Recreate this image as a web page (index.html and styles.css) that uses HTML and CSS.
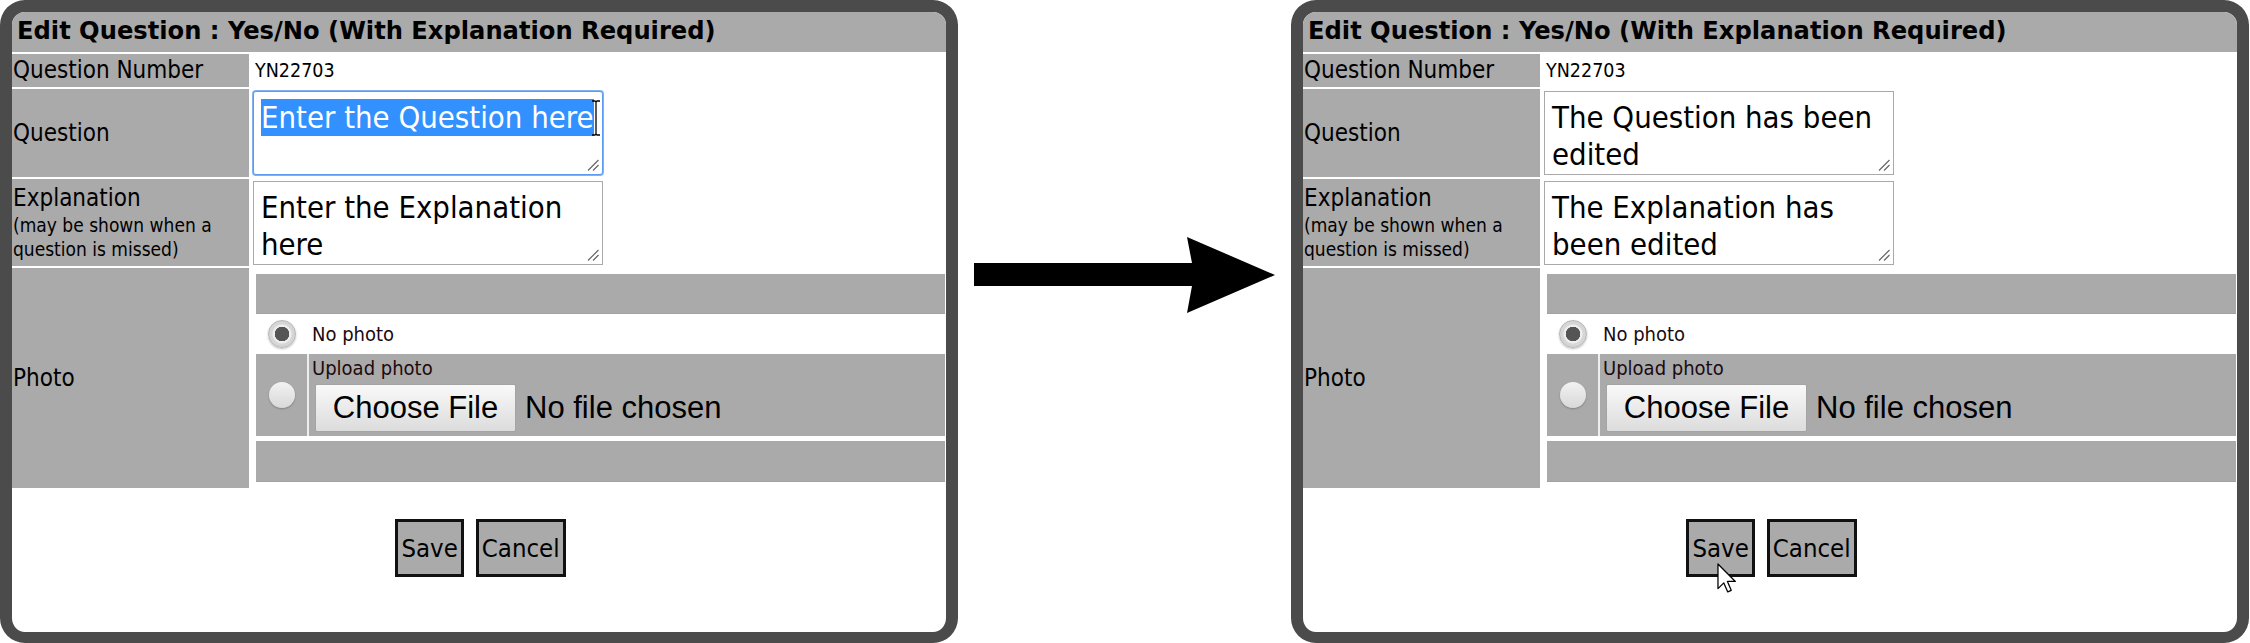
FILE: index.html
```html
<!DOCTYPE html>
<html lang="en">
<head>
<meta charset="utf-8">
<title>Edit Question</title>
<link rel="stylesheet" href="styles.css">
</head>
<body>
<div class="scene">
  <div class="panel">
    <div class="panel-title">Edit Question : Yes/No (With Explanation Required)</div>
    <div class="form">
      <div class="label">Question Number</div>
      <div class="value value-text">YN22703</div>
      <div class="label">Question</div>
      <div class="value">
        <div class="ta ta-focus"><span class="sel">Enter the Question here</span>
          <svg class="ibeam" width="10" height="36" viewBox="0 0 10 36"><path d="M1 1h3l1 1 1-1h3M5 2v32M1 35h3l1-1 1 1h3" fill="none" stroke="#000" stroke-width="1.3"/></svg>
          <svg class="grip" width="12" height="12" viewBox="0 0 12 12"><path d="M11.5 1L1 11.5M11.5 6L6 11.5" stroke="#666" stroke-width="1.2"/></svg>
        </div>
      </div>
      <div class="label"><div class="expl-main">Explanation</div><div class="expl-sub">(may be shown when a<br>question is missed)</div></div>
      <div class="value">
        <div class="ta">Enter the Explanation<br>here
          <svg class="grip" width="12" height="12" viewBox="0 0 12 12"><path d="M11.5 1L1 11.5M11.5 6L6 11.5" stroke="#666" stroke-width="1.2"/></svg>
        </div>
      </div>
      <div class="label">Photo</div>
      <div class="value photo">
        <div class="photo-bar"></div>
        <div class="photo-row photo-none">
          <div class="radio-cell"><span class="radio radio-on"></span></div>
          <div class="opt-text">No photo</div>
        </div>
        <div class="photo-row photo-upload">
          <div class="radio-cell"><span class="radio"></span></div>
          <div class="upload-content">
            <div class="opt-text">Upload photo</div>
            <div class="file"><button class="file-btn">Choose File</button><span class="file-name">No file chosen</span></div>
          </div>
        </div>
        <div class="photo-bar photo-bar-bottom"></div>
      </div>
    </div>
    <div class="actions"><button class="btn">Save</button><button class="btn">Cancel</button></div>
  </div>

  <div class="arrow">
    <svg width="333" height="643" viewBox="0 0 333 643"><polygon points="16,263 234,263 229,237 317,275 229,313 234,286 16,286" fill="#000"/></svg>
  </div>

  <div class="panel">
    <div class="panel-title">Edit Question : Yes/No (With Explanation Required)</div>
    <div class="form">
      <div class="label">Question Number</div>
      <div class="value value-text">YN22703</div>
      <div class="label">Question</div>
      <div class="value">
        <div class="ta">The Question has been<br>edited
          <svg class="grip" width="12" height="12" viewBox="0 0 12 12"><path d="M11.5 1L1 11.5M11.5 6L6 11.5" stroke="#666" stroke-width="1.2"/></svg>
        </div>
      </div>
      <div class="label"><div class="expl-main">Explanation</div><div class="expl-sub">(may be shown when a<br>question is missed)</div></div>
      <div class="value">
        <div class="ta">The Explanation has<br>been edited
          <svg class="grip" width="12" height="12" viewBox="0 0 12 12"><path d="M11.5 1L1 11.5M11.5 6L6 11.5" stroke="#666" stroke-width="1.2"/></svg>
        </div>
      </div>
      <div class="label">Photo</div>
      <div class="value photo">
        <div class="photo-bar"></div>
        <div class="photo-row photo-none">
          <div class="radio-cell"><span class="radio radio-on"></span></div>
          <div class="opt-text">No photo</div>
        </div>
        <div class="photo-row photo-upload">
          <div class="radio-cell"><span class="radio"></span></div>
          <div class="upload-content">
            <div class="opt-text">Upload photo</div>
            <div class="file"><button class="file-btn">Choose File</button><span class="file-name">No file chosen</span></div>
          </div>
        </div>
        <div class="photo-bar photo-bar-bottom"></div>
      </div>
    </div>
    <div class="actions"><button class="btn">Save</button><button class="btn">Cancel</button></div>
    <svg class="pointer" width="19" height="30" viewBox="0 0 12 19"><path d="M0.6 0.6V16.2L4.3 12.6L6.8 18.3L9 17.3L6.6 11.7H11.6Z" fill="#fff" stroke="#000" stroke-width="0.8" stroke-linejoin="round"/></svg>
  </div>
</div>
</body>
</html>
```

FILE: styles.css
```css
html, body {
  margin: 0;
  padding: 0;
  background: #fff;
}

body {
  font-family: "DejaVu Sans Condensed", "DejaVu Sans", sans-serif;
  color: #000;
}

.scene {
  display: flex;
  width: 2250px;
  height: 643px;
}

.panel {
  position: relative;
  flex: 0 0 958px;
  height: 643px;
  box-sizing: border-box;
  border: 12px solid #4b4b4b;
  border-bottom-width: 11px;
  border-radius: 25px;
  background: #fff;
  overflow: hidden;
}

.panel-title {
  height: 40px;
  background: #aaaaaa;
  font-family: "DejaVu Sans", sans-serif;
  font-weight: bold;
  font-size: 24.2px;
  line-height: 38px;
  padding-left: 5px;
  white-space: nowrap;
}

.form {
  display: grid;
  grid-template-columns: 237px 695px;
  grid-template-rows: 33px 88px 87px 220px;
  gap: 2px;
  margin-top: 2px;
}

.label {
  background: #aaaaaa;
  display: flex;
  flex-direction: column;
  justify-content: center;
  padding-left: 1px;
  font-size: 24px;
  line-height: 29px;
  white-space: nowrap;
}

.expl-sub {
  font-size: 19px;
  line-height: 24px;
}

.value {
  padding: 2px;
}

.value-text {
  display: flex;
  align-items: center;
  padding: 0 0 0 4px;
  font-size: 19.5px;
}

.ta {
  position: relative;
  box-sizing: border-box;
  width: 350px;
  height: 84px;
  border: 1px solid #a9a9a9;
  padding: 7px 7px;
  font-size: 30.8px;
  line-height: 37px;
  white-space: nowrap;
  overflow: hidden;
  background: #fff;
}

.ta-focus {
  border-color: #5b9bf2;
  box-shadow: 0 0 0 1px #7fb2f5;
  border-radius: 3px;
}

.sel {
  display: inline-block;
  background: #3390ff;
  color: #fff;
  line-height: 37px;
}

.ibeam {
  position: absolute;
  left: 337px;
  top: 8px;
}

.grip {
  position: absolute;
  right: 3px;
  bottom: 3px;
}

.photo {
  display: flex;
  flex-direction: column;
  padding: 6px 1px 6px 5px;
}

.photo-bar {
  height: 40px;
  background: #aaaaaa;
  box-shadow: inset 0 -1px 0 #a2a2a2;
}

.photo-bar-bottom {
  height: 41px;
  margin-top: 5px;
}

.photo-row {
  display: flex;
  gap: 2px;
}

.photo-none {
  height: 40px;
  background: #fff;
}

.photo-upload {
  height: 82px;
  background: #eeeeee;
}

.radio-cell {
  flex: 0 0 51px;
  display: flex;
  align-items: center;
  justify-content: center;
}

.photo-upload .radio-cell,
.upload-content {
  background: #aaaaaa;
}

.opt-text {
  font-size: 20px;
  line-height: 24px;
  color: #1a0a10;
  padding-left: 3px;
}

.photo-none .opt-text {
  align-self: center;
  padding-left: 3px;
}

.radio {
  display: block;
  box-sizing: border-box;
  width: 26px;
  height: 26px;
  border-radius: 50%;
  background: linear-gradient(#f2f2f2, #d8d8d8);
  box-shadow: 0 1px 2px rgba(0, 0, 0, 0.25);
}

.radio-on {
  width: 28px;
  height: 28px;
  border: 1px solid #b5b5b5;
  background: radial-gradient(circle, #555 0 7px, #eeeeee 7.5px 9px, #d6d6d6 10px);
}

.upload-content {
  flex: 1;
  padding-top: 2px;
}

.file {
  display: flex;
  align-items: center;
  margin-top: 4px;
  padding-left: 6px;
}

.file-btn {
  box-sizing: border-box;
  height: 48px;
  width: 201px;
  padding: 0;
  border: 1px solid #a4a4a4;
  border-radius: 2px;
  background: linear-gradient(#f9f9f9, #dcdcdc);
  font-family: "Liberation Sans", Arial, sans-serif;
  font-size: 31px;
  color: #000;
}

.file-name {
  margin-left: 9px;
  font-family: "Liberation Sans", Arial, sans-serif;
  font-size: 31px;
}

.actions {
  display: flex;
  justify-content: center;
  gap: 12px;
  margin-top: 31px;
  padding-left: 3px;
}

.btn {
  height: 58px;
  border: 3px solid #111;
  background: #aaaaaa;
  font-family: "DejaVu Sans Condensed", "DejaVu Sans", sans-serif;
  font-size: 25.5px;
  color: #000;
  padding: 0 3px;
}

.arrow {
  flex: 0 0 333px;
  height: 643px;
}

.arrow svg {
  display: block;
}

.pointer {
  position: absolute;
  left: 414px;
  top: 551px;
}
```
